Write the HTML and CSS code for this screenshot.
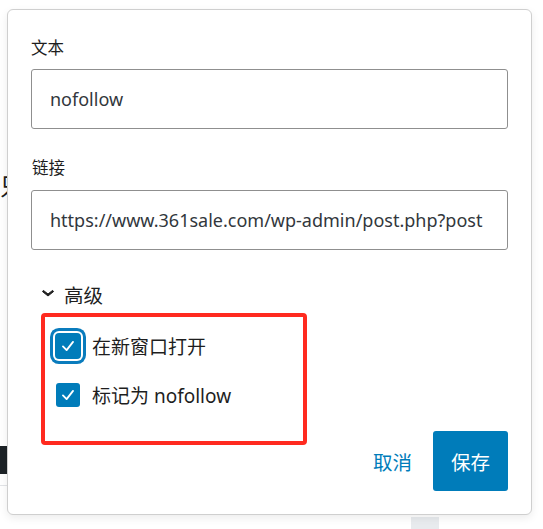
FILE: index.html
```html
<!DOCTYPE html>
<html lang="zh-CN">
<head>
  <meta charset="UTF-8" />
  <title>链接设置</title>
  <link rel="stylesheet" href="styles.css">
</head>
<body>

  <div class="backdrop">
    <span class="bg-glyph">只</span>
    <div class="bg-bar"></div>
    <div class="bg-line"></div>
    <div class="bg-tab"></div>
  </div>

  <div class="popover">

    <div class="field">
      <label class="field-label">文本</label>
      <input class="field-input" type="text" value="nofollow">
    </div>

    <div class="field field-link">
      <label class="field-label">链接</label>
      <input class="field-input" type="text" value="https://www.361sale.com/wp-admin/post.php?post">
    </div>

    <button class="toggle" type="button">
      <svg class="toggle-icon" viewBox="0 0 24 24" width="24" height="24">
        <path d="M17.5 11.6L12 16l-5.5-4.4.9-1.2L12 14l4.6-3.6 1 1.2z"></path>
      </svg>
      <span>高级</span>
    </button>

    <div class="options">
      <label class="option">
        <span class="check check-focus">
          <svg viewBox="0 0 24 24"><path d="M6.5 12.5l4 4 7-9"></path></svg>
        </span>
        <span class="option-text">在新窗口打开</span>
      </label>
      <label class="option">
        <span class="check">
          <svg viewBox="0 0 24 24"><path d="M6.5 12.5l4 4 7-9"></path></svg>
        </span>
        <span class="option-text">标记为 nofollow</span>
      </label>
    </div>

    <div class="actions">
      <button class="btn-link" type="button">取消</button>
      <button class="btn" type="button">保存</button>
    </div>

  </div>

</body>
</html>
```

FILE: styles.css
```css
    body {
      margin: 0;
      background-color: #fff;
      font-family: "Noto Sans", "Noto Sans CJK SC", sans-serif;
      color: #1e1e1e;
      overflow: hidden;
    }

    .backdrop {
      height: 529px;
      display: flex;
      flex-direction: column;
      align-items: flex-start;
    }

    .bg-glyph {
      margin-top: 170px;
      font-family: "Noto Sans CJK SC", sans-serif;
      font-size: 24px;
      line-height: 30px;
      color: #1e1e1e;
    }

    .bg-bar {
      margin-top: 246px;
      width: 8px;
      height: 28px;
      background-color: #1d2327;
    }

    .bg-line {
      margin-top: 11px;
      width: 8px;
      height: 1px;
      background-color: #e2e4e7;
    }

    .bg-tab {
      margin-top: 31px;
      margin-left: 411px;
      width: 28px;
      height: 12px;
      background-color: #e8ebee;
    }

    /* the popover sits on top of the editor */
    .popover {
      position: absolute;
      left: 7px;
      top: 9px;
      width: 525px;
      box-sizing: border-box;
      padding: 26px 23px 23px 23px;
      background-color: #fff;
      border: 1px solid #cfcfcf;
      border-radius: 6px;
      box-shadow: 0 3px 8px rgba(0,0,0,0.08);
    }

    .field {
      display: flex;
      flex-direction: column;
    }

    .field-link {
      margin-top: 27px;
    }

    .field-label {
      font-family: "Noto Sans CJK SC", sans-serif;
      font-size: 16.5px;
      line-height: 22px;
      margin-bottom: 11px;
    }

    .field-link .field-label {
      margin-bottom: 12px;
      padding-left: 1px;
    }

    .field-input {
      height: 60px;
      box-sizing: border-box;
      margin: 0;
      padding: 0 18px;
      border: 1px solid #8f8f8f;
      border-radius: 3px;
      font-family: "Noto Sans", "Noto Sans CJK SC", sans-serif;
      font-size: 18px;
      color: #32373c;
      background-color: #fff;
    }

    .toggle {
      display: flex;
      align-items: flex-start;
      gap: 4px;
      height: 30px;
      margin: 30px 0 0 5px;
      padding: 0;
      border: none;
      background: none;
      font-family: "Noto Sans CJK SC", sans-serif;
      font-size: 19.5px;
      color: #1e1e1e;
    }

    .toggle span {
      line-height: 30px;
    }

    .toggle-icon {
      fill: #1e1e1e;
      stroke: #1e1e1e;
      stroke-width: 1;
      stroke-linejoin: round;
    }

    .options {
      margin: 3px 0 0 10px;
      width: 266px;
      box-sizing: border-box;
      padding: 16px 0 33px 10px;
      border: 4px solid #ff2a1f;
      border-radius: 4px;
      display: flex;
      flex-direction: column;
      gap: 23px;
    }

    .option {
      display: flex;
      align-items: center;
      gap: 12px;
      height: 26px;
    }

    .check {
      width: 24px;
      height: 24px;
      box-sizing: border-box;
      margin-left: 1px;
      background-color: #007cba;
      border-radius: 3px;
      display: flex;
      align-items: center;
      justify-content: center;
    }

    .check svg {
      width: 22px;
      height: 22px;
      fill: none;
      stroke: #fff;
      stroke-width: 2;
      stroke-linecap: round;
      stroke-linejoin: round;
    }

    .check-focus {
      width: 26px;
      height: 26px;
      margin-left: 0;
      margin-right: -1px;
      box-shadow: 0 0 0 2px #fff, 0 0 0 5px #0a7cbd;
      border-radius: 4px;
    }

    .option-text {
      font-family: "Noto Sans", "Noto Sans CJK SC", sans-serif;
      font-size: 19px;
      color: #1e1e1e;
    }

    .actions {
      display: flex;
      justify-content: flex-end;
      align-items: center;
      margin-top: -14px;
    }

    .btn-link {
      margin-right: 21px;
      padding: 0;
      border: none;
      background: none;
      font-family: "Noto Sans CJK SC", sans-serif;
      font-size: 19.5px;
      color: #007cba;
      cursor: pointer;
    }

    .btn {
      height: 60px;
      padding: 0 18px;
      border: none;
      border-radius: 3px;
      background-color: #007cba;
      color: #fff;
      font-family: "Noto Sans CJK SC", sans-serif;
      font-size: 19.5px;
      cursor: pointer;
    }
```
